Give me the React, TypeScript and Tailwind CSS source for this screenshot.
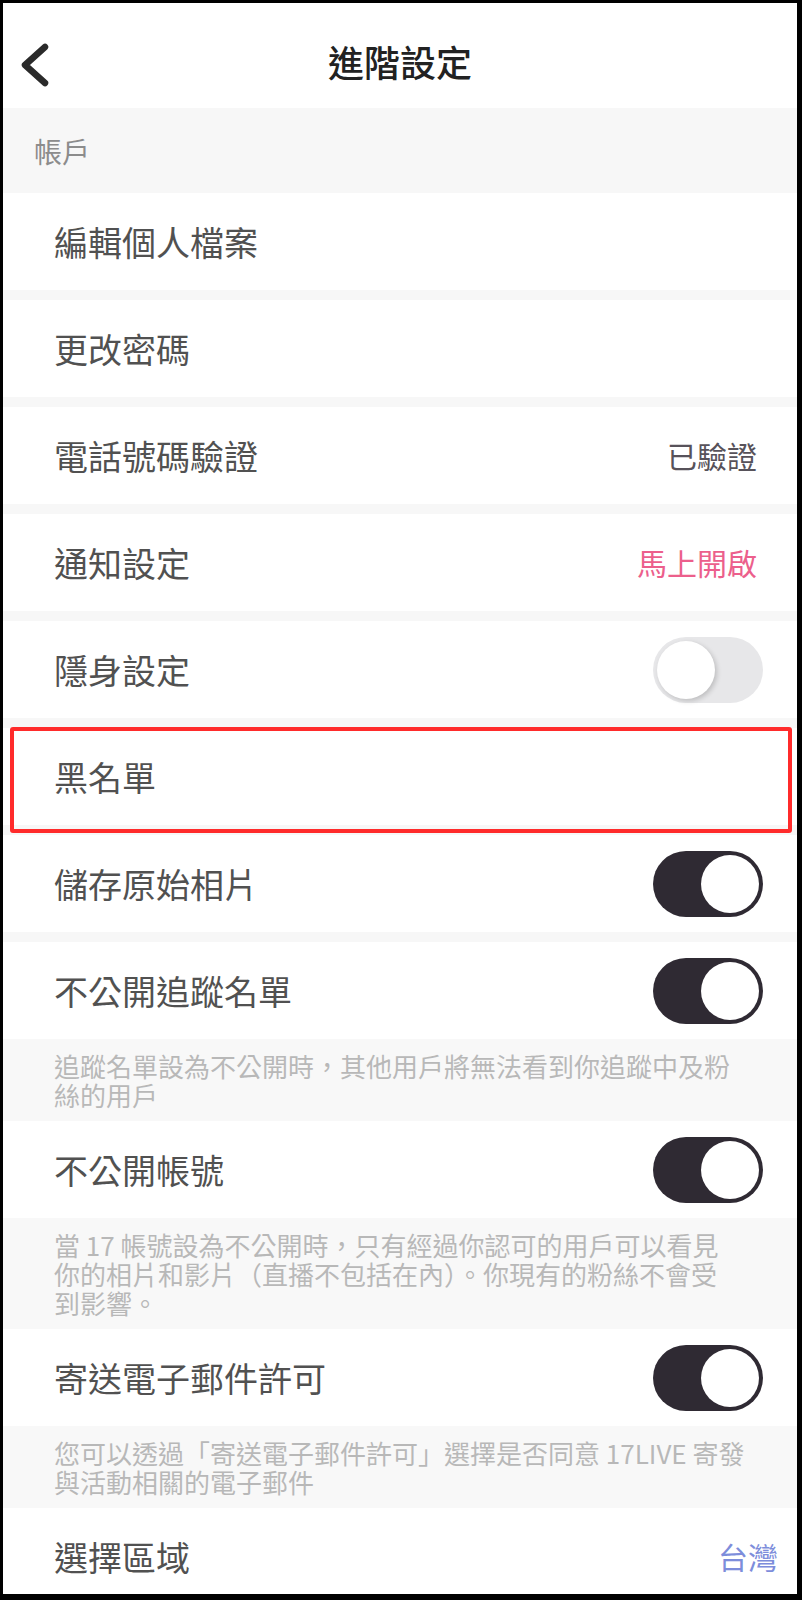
import React from "react";

const FONT = { fontFamily: '"Noto Sans CJK TC", "Noto Sans", sans-serif' };

type Row =
  | { kind: "row"; label: string; right?: React.ReactNode; toggle?: boolean; boxed?: boolean; gapBefore?: boolean }
  | { kind: "note"; lines: string[] };

const ROWS: Row[] = [
  { kind: "row", label: "編輯個人檔案" },
  { kind: "row", label: "更改密碼", gapBefore: true },
  { kind: "row", label: "電話號碼驗證", gapBefore: true, right: <span className="mr-[6px] text-[30px] text-[#57525a]">已驗證</span> },
  { kind: "row", label: "通知設定", gapBefore: true, right: <span className="mr-[6px] text-[30px] text-[#ec5f8c]">馬上開啟</span> },
  { kind: "row", label: "隱身設定", gapBefore: true, toggle: false },
  { kind: "row", label: "黑名單", gapBefore: true, boxed: true },
  { kind: "row", label: "儲存原始相片", gapBefore: true, toggle: true },
  { kind: "row", label: "不公開追蹤名單", gapBefore: true, toggle: true },
  { kind: "note", lines: ["追蹤名單設為不公開時，其他用戶將無法看到你追蹤中及粉", "絲的用戶"] },
  { kind: "row", label: "不公開帳號", toggle: true },
  {
    kind: "note",
    lines: ["當 17 帳號設為不公開時，只有經過你認可的用戶可以看見", "你的相片和影片（直播不包括在內）。你現有的粉絲不會受", "到影響。"],
  },
  { kind: "row", label: "寄送電子郵件許可", toggle: true },
  { kind: "note", lines: ["您可以透過「寄送電子郵件許可」選擇是否同意 17LIVE 寄發", "與活動相關的電子郵件"] },
  { kind: "row", label: "選擇區域", right: <span className="mr-[-15px] text-[30px] text-[#7d8ddb]">台灣</span> },
];

function Toggle({ on }: { on: boolean }) {
  if (on) {
    return (
      <div className="flex h-[66px] w-[110px] items-center justify-end rounded-full bg-[#2f2a33] p-[4px]">
        <div className="h-[58px] w-[58px] rounded-full bg-white" />
      </div>
    );
  }
  return (
    <div className="flex h-[66px] w-[110px] items-center justify-start rounded-full bg-[#e7e7e9] p-[4px]">
      <div className="h-[58px] w-[58px] rounded-full bg-white shadow-[2px_2px_5px_rgba(0,0,0,0.18)]" />
    </div>
  );
}

export default function App() {
  return (
    <div className="h-[1600px] w-[802px] bg-black pb-[6px] pl-[3px] pr-[5px] pt-[3px]" style={FONT}>
      <div className="flex h-full flex-col overflow-hidden bg-white">
        {/* header */}
        <div className="relative flex h-[105px] shrink-0 items-center justify-center">
          <svg className="absolute left-[14px] top-[35px]" width="40" height="50" viewBox="0 0 40 50">
            <polyline
              points="28,9 8,27 28,45"
              fill="none"
              stroke="#2a2a2a"
              strokeWidth="6.5"
              strokeLinecap="round"
              strokeLinejoin="round"
            />
          </svg>
          <span className="mt-[10px] text-[36px] font-medium text-[#222]">進階設定</span>
        </div>

        <div className="flex h-[85px] shrink-0 items-center bg-[#f7f7f7] pl-[31px] text-[28px] text-[#8c8c8c]">帳戶</div>

        {ROWS.map((r, i) =>
          r.kind === "note" ? (
            <div
              key={i}
              className="shrink-0 bg-[#f8f8f8] pb-[12px] pl-[51px] pr-[40px] pt-[12px] text-[26px] leading-[29px] text-[#b8b8b8]"
            >
              {r.lines.map((l, j) => (
                <div key={j} className="whitespace-nowrap">
                  {l}
                </div>
              ))}
            </div>
          ) : (
            <React.Fragment key={i}>
              {r.gapBefore && <div className="h-[10px] shrink-0 bg-[#f7f7f7]" />}
              <div className="relative flex h-[97px] shrink-0 items-center justify-between bg-white pl-[51px] pr-[34px]">
                <span className="text-[34px] text-[#515151]">{r.label}</span>
                {r.right}
                {r.toggle !== undefined && <Toggle on={r.toggle} />}
                {r.boxed && (
                  <div className="absolute bottom-[-8px] left-[7px] right-[5px] top-[-1px] z-10 rounded-[3px] border-4 border-[#ff2b2b]" />
                )}
              </div>
            </React.Fragment>
          ),
        )}
      </div>
    </div>
  );
}
